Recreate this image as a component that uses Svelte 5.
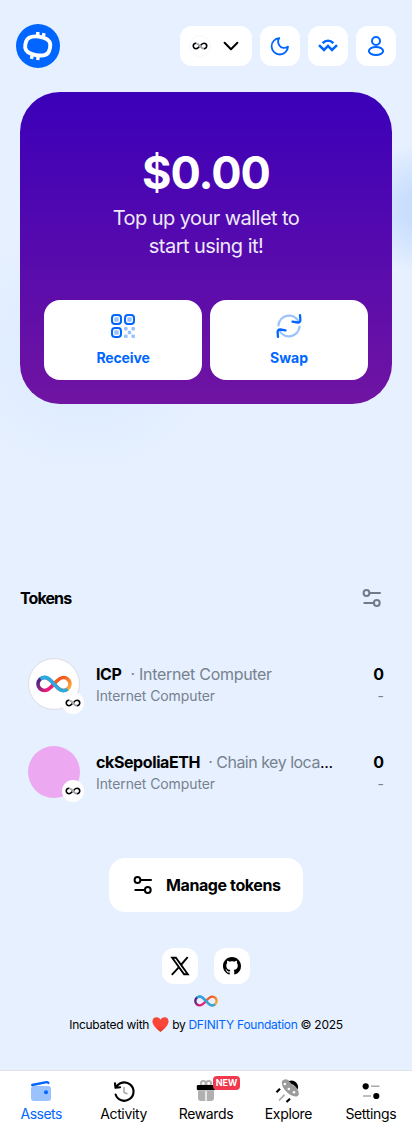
<script>
  const tokens = [
    { symbol: 'ICP', name: 'Internet Computer', network: 'Internet Computer', icp: true },
    { symbol: 'ckSepoliaETH', name: 'Chain key loca', network: 'Internet Computer', icp: false, cut: true }
  ];
  const leftLoop = 'M0 0C-4-4.6-6.4-6.5-9.4-6.5-13-6.5-16-3.6-16 0S-13 6.5-9.4 6.5C-6.4 6.5-4 4.6 0 0';
  const rightLoop = 'M0 0C4-4.6 6.4-6.5 9.4-6.5 13-6.5 16-3.6 16 0S13 6.5 9.4 6.5C6.4 6.5 4 4.6 0 0';
  const blueStrand = 'M-13.5-5.1C-10.5-7.3-7-6.8-4.5-4.7L4.5 4.7C7 6.8 10.5 7.3 13.5 5.1';
</script>

{#snippet infinity(w)}
  <svg width={w} height={w * 0.5} viewBox="-18 -9 36 18" fill="none" stroke-width="3.6">
    <defs>
      <linearGradient id="warm" gradientUnits="userSpaceOnUse" x1="2" y1="-5" x2="16" y2="5"><stop offset=".3" stop-color="#f15a24" /><stop offset="1" stop-color="#fbb03b" /></linearGradient>
      <linearGradient id="cool" gradientUnits="userSpaceOnUse" x1="-16" y1="-4" x2="-4" y2="5"><stop offset=".1" stop-color="#522785" /><stop offset=".9" stop-color="#ed1e79" /></linearGradient>
    </defs>
    <path d={leftLoop} stroke="url(#cool)" />
    <path d={rightLoop} stroke="url(#warm)" />
    <path d={blueStrand} stroke="#29abe2" />
  </svg>
{/snippet}

{#snippet monoInfinity()}
  <svg width="16" height="8" viewBox="-19 -9.5 38 19" fill="none" stroke-width="3.8">
    <path d={leftLoop} stroke="#000" />
    <path d={rightLoop} stroke="#000" />
    <path d="M-9-6.5C-6-6.5-4-4.6 0 0S6 6.5 9 6.5" stroke="#fff" stroke-width="4.4" />
    <path d="M-9-6.5C-6-6.5-4-4.6 0 0S6 6.5 9 6.5" stroke="#9a9ca8" stroke-width="3" />
  </svg>
{/snippet}

{#snippet sliders()}
  <svg width="20" height="20" viewBox="0 0 20 20" fill="none" stroke="currentColor" stroke-width="2" stroke-linecap="round">
    <circle cx="4.5" cy="5" r="2.9" /><path d="M8 5h10M2.3 15h9" /><circle cx="14.8" cy="15" r="2.9" />
  </svg>
{/snippet}

<div class="page">
  <header>
    <svg class="logo" width="44" height="44" viewBox="0 0 44 44">
      <circle cx="22" cy="22" r="22" fill="#0066ff" />
      <g fill="none" stroke="#fff" stroke-width="3.9">
        <path d="M10.2 17.3C12 12.6 17.5 11.8 23 12.7S33.8 15.6 34.3 20.3C34.5 23 33.7 25.6 32.8 27.6 31 31.8 25.8 32 20.5 31.2S9.8 28.8 9.2 23.8C9 21.5 9.4 19.4 10.2 17.3Z" />
        <path d="M21.8 12.5V8M27.2 13.3l.8-4.2M16.3 30.7l-.8 4.2M22.3 31.5l-.6 4.5" stroke-width="3.4" />
      </g>
    </svg>
    <div class="tools">
      <button class="tool network" aria-label="Network">
        <span class="ring">{@render monoInfinity()}</span>
        <svg width="16" height="10" viewBox="0 0 16 10" fill="none" stroke="#000" stroke-width="2" stroke-linecap="round" stroke-linejoin="round"><path d="M1.6 1.8 8 8.2l6.4-6.4" /></svg>
      </button>
      <button class="tool" aria-label="Theme">
        <svg width="20" height="20" viewBox="0 0 20 20" fill="none" stroke="#0066ff" stroke-width="1.8" stroke-linejoin="round"><path d="M9.3 2.1A8.2 8.2 0 1 0 18 10.6C15 12.8 11.3 12.3 9.4 9.4 7.8 7 7.8 4.3 9.3 2.1Z" /></svg>
      </button>
      <button class="tool" aria-label="WalletConnect">
        <svg width="20" height="14" viewBox="0 0 20 14" fill="none" stroke="#0066ff" stroke-width="2.5" stroke-linejoin="miter"><path d="M4.6 4.1C7.8 1 12.2 1 15.4 4.1M1 6.1l5 4.8 4-4 4 4 5-4.8" /></svg>
      </button>
      <button class="tool" aria-label="Account">
        <svg width="20" height="22" viewBox="0 0 20 22" fill="none" stroke="#0066ff" stroke-width="2"><circle cx="10" cy="6" r="4" /><ellipse cx="10" cy="16" rx="7.1" ry="4" /></svg>
      </button>
    </div>
  </header>

  <section class="card">
    <h1>$0.00</h1>
    <p>Top up your wallet to<br /><span class="second">start using it!</span></p>
    <div class="actions">
      <button>
        <svg width="26" height="26" viewBox="0 0 26 26" fill="none">
          <g stroke="#0066ff" stroke-width="2"><rect x="2" y="2" width="9" height="9" rx="3" /><rect x="15" y="2" width="9" height="9" rx="3" /><rect x="2" y="15" width="9" height="9" rx="3" /></g>
          <g fill="#99c2ff"><rect x="4.3" y="4.3" width="4.4" height="4.4" rx="1" /><rect x="17.3" y="4.3" width="4.4" height="4.4" rx="1" /><rect x="4.3" y="17.3" width="4.4" height="4.4" rx="1" /><rect x="14" y="14" width="3.6" height="3.6" rx="1" /><rect x="21.4" y="14" width="3.6" height="3.6" rx="1" /><rect x="17.7" y="17.7" width="3.6" height="3.6" rx="1" /><rect x="14" y="21.4" width="3.6" height="3.6" rx="1" /><rect x="21.4" y="21.4" width="3.6" height="3.6" rx="1" /></g>
        </svg>
        <span class="receive">Receive</span>
      </button>
      <button>
        <svg width="26" height="26" viewBox="0 0 26 26" fill="none" stroke-width="2.3" stroke-linecap="round" stroke-linejoin="round">
          <path d="M2.4 12.3A10.8 10.8 0 0 1 22.4 8M23.6 13.7A10.8 10.8 0 0 1 3.6 18" stroke="#99c2ff" />
          <path d="M24 2.2 24.4 7Q24.3 9.6 21.8 9.5L16.5 8.6M2 23.8 1.6 19Q1.7 16.4 4.2 16.5L9.5 17.4" stroke="#0066ff" />
        </svg>
        <span class="swap">Swap</span>
      </button>
    </div>
  </section>

  <main>
    <div class="heading"><h2>Tokens</h2><span class="filter">{@render sliders()}</span></div>
    {#each tokens as t}
      <div class="token">
        <div class="avatar" class:icp={t.icp}>
          {#if t.icp}{@render infinity(36)}{/if}
          <span class="badge">{@render monoInfinity()}</span>
        </div>
        <div class="info">
          <div class="name"><b>{t.symbol}</b><span class="full" class:tight={t.cut}>· {t.name}</span>{#if t.cut}<span class="dots">...</span>{/if}</div>
          <div class="net">{t.network}</div>
        </div>
        <div class="amount"><b>0</b><span>-</span></div>
      </div>
    {/each}
    <button class="manage">{@render sliders()}<span>Manage tokens</span></button>
  </main>

  <footer>
    <div class="social">
      <span class="soc"><svg width="20" height="20" viewBox="0 0 20 20"><path d="M2.2 1.7h3.7l11.9 16.6h-3.7z" fill="#fff" stroke="#000" stroke-width="1.9" /><path d="M17.7 1.2 11.3 8.5M8.5 11.7 1.8 18.8" stroke="#000" stroke-width="1.9" /></svg></span>
      <span class="soc"><svg width="18" height="18" viewBox="0 0 16 16"><path fill="#000" d="M8 0C3.58 0 0 3.58 0 8c0 3.54 2.29 6.53 5.47 7.59.4.07.55-.17.55-.38 0-.19-.01-.82-.01-1.49-2.01.37-2.53-.49-2.69-.94-.09-.23-.48-.94-.82-1.13-.28-.15-.68-.52-.01-.53.63-.01 1.08.58 1.23.82.72 1.21 1.87.87 2.33.66.07-.52.28-.87.51-1.07-1.78-.2-3.64-.89-3.64-3.95 0-.87.31-1.59.82-2.15-.08-.2-.36-1.02.08-2.12 0 0 .67-.21 2.2.82.64-.18 1.32-.27 2-.27s1.36.09 2 .27c1.53-1.04 2.2-.82 2.2-.82.44 1.1.16 1.92.08 2.12.51.56.82 1.27.82 2.15 0 3.07-1.87 3.75-3.65 3.95.29.25.54.73.54 1.48 0 1.07-.01 1.93-.01 2.2 0 .21.15.46.55.38A8.01 8.01 0 0 0 16 8c0-4.42-3.58-8-8-8Z" /></svg></span>
    </div>
    <div class="mark">{@render infinity(24)}</div>
    <div class="credit">
      <span>Incubated with</span>
      <svg width="17" height="15" viewBox="0 0 17 15"><defs><linearGradient id="heart" x2="0" y2="1"><stop stop-color="#f04a3c" /><stop offset=".6" stop-color="#ff4338" /><stop offset="1" stop-color="#d93327" /></linearGradient></defs><path fill="url(#heart)" d="M8.5 2.7C9.8.3 12.2-.1 14 .5c2.3.8 3 3.3 2.3 5.6C15.4 9.5 11.8 12.4 8.5 15 5.2 12.4 1.6 9.5.7 6.1 0 3.8.7 1.3 3 .5c1.8-.6 4.2-.2 5.5 2.2Z" /></svg>
      <span>by</span> <a href="#dfinity">DFINITY Foundation</a> <span>© 2025</span>
    </div>
  </footer>

  <nav>
    <a class="active" href="#assets">
      <svg width="24" height="24" viewBox="0 0 24 24"><rect x="2" y="7" width="20" height="15" rx="3" fill="#99c2ff" /><path d="M3.2 6 17.5 3.2Q19 3 19.4 4" fill="none" stroke="#0066ff" stroke-width="2.3" stroke-linecap="round" /><circle cx="17" cy="13.3" r="2" fill="#0066ff" /></svg>
      <span>Assets</span>
    </a>
    <a href="#activity">
      <svg width="24" height="24" viewBox="0 0 24 24" fill="none" stroke="#000" stroke-width="2.1" stroke-linecap="round" stroke-linejoin="round"><path d="M4 8.7A9.2 9.2 0 1 1 3.6 15.5M3 4.4 3.5 8.8l4.6-.6" /><path d="M12 8.5v4.7l3 1.5" stroke="#aaa" stroke-width="1.6" /></svg>
      <span>Activity</span>
    </a>
    <a href="#rewards">
      <div class="gift">
        <svg width="24" height="24" viewBox="0 0 24 24"><g fill="none" stroke="#b0b0b0" stroke-width="1.9"><circle cx="9.3" cy="4.4" r="2.4" /><circle cx="14.7" cy="4.4" r="2.4" /></g><path fill="#b0b0b0" d="M4 12h7.3v10H7a3 3 0 0 1-3-3zM12.7 12H20v7a3 3 0 0 1-3 3h-4.3z" /><rect x="2.8" y="6" width="18.4" height="5.2" rx="1.3" fill="#000" /></svg>
        <span class="new">NEW</span>
      </div>
      <span>Rewards</span>
    </a>
    <a href="#explore">
      <svg width="26" height="24" viewBox="0 0 26 24"><path d="M8.3 1C12-1.3 15.3 2.3 17.3 5.8c3.6 1.9 7.2 5.8 6.4 9.6-1 3.7-7.8 2-12-2.3S5 3.3 8.3 1Z" fill="#9b9b9b" /><path d="M13.8 2.3C18.5-.9 25 5.2 22.6 10.2 20.7 7.6 19 6 16.5 5 15.9 3.9 15 3 13.8 2.3Z" fill="#000" /><g fill="#fff"><circle cx="9.8" cy="5" r="1.3" /><circle cx="13.8" cy="10" r="1.3" /><circle cx="19" cy="13.3" r="1.3" /></g><path d="M5 9.8 1.5 13.3M15 19.8 11.5 23" stroke="#000" stroke-width="2.2" /><path d="M9.5 15.8 4 21.5" stroke="#aaa" stroke-width="1.8" /></svg>
      <span>Explore</span>
    </a>
    <a href="#settings">
      <svg width="24" height="24" viewBox="0 0 24 24"><path d="M12 7.3h8.5M4 17h8" stroke="#aaa" stroke-width="1.6" /><circle cx="6.7" cy="7.3" r="3.1" fill="#000" /><circle cx="17.3" cy="17" r="3.1" fill="#000" /></svg>
      <span>Settings</span>
    </a>
  </nav>
</div>

<style>
  :global(body) { margin: 0; }
  * { box-sizing: border-box; }
  .page {
    width: 412px; height: 1132px; display: flex; flex-direction: column; overflow: hidden;
    font-family: Inter, "Liberation Sans", sans-serif; color: #000;
    background:
      radial-gradient(ellipse 90px 66px at 436px 208px, #c9defd 35%, #c9defd00 100%),
      radial-gradient(ellipse 130px 120px at 85px 350px, #dcebff 20%, #dcebff00 100%),
      #e6f0ff;
  }
  button { font: inherit; border: 0; padding: 0; color: inherit; }
  svg { display: block; flex: none; }
  a { color: inherit; text-decoration: none; }
  header { display: flex; justify-content: space-between; align-items: center; height: 92px; padding: 0 16px; }
  .tools { display: flex; gap: 8px; }
  .tool { width: 40px; height: 40px; border-radius: 12px; background: #fff; display: grid; place-items: center; }
  .network { width: 72px; display: flex; align-items: center; padding: 0 13px 0 9px; justify-content: space-between; }
  .ring { width: 22px; height: 22px; border: 1px solid #f8f8f8; border-radius: 50%; display: grid; place-items: center; }
  .card {
    margin: 0 20px; height: 312px; border-radius: 40px; padding: 53px 24px 24px; color: #fff; text-align: center;
    background: linear-gradient(#3b00b9, #7014a2); display: flex; flex-direction: column;
  }
  h1 { margin: 0; font-size: 45px; line-height: 56px; font-weight: 700; letter-spacing: -1px; }
  p { margin: 3px 0 0; font-size: 20px; line-height: 28px; letter-spacing: -0.55px; color: #eee9fa; }
  .actions { margin-top: auto; display: grid; grid-template-columns: 1fr 1fr; gap: 8px; }
  .actions button {
    height: 80px; border-radius: 16px; background: #fff; color: #0066ff; font-size: 14px; line-height: 20px; font-weight: 700;
    display: flex; flex-direction: column; align-items: center; padding-top: 13px; gap: 9px;
  }
  .receive { letter-spacing: -0.15px; }
  main { margin-top: 178px; display: flex; flex-direction: column; }
  .heading { height: 32px; display: flex; align-items: center; justify-content: space-between; padding: 0 30px 0 20px; }
  h2 { margin: 0; font-size: 16px; font-weight: 700; letter-spacing: -0.9px; }
  .filter { color: #6f7b88; }
  .token { height: 52px; margin: 44px 28px -8px; display: flex; align-items: center; }
  .avatar { position: relative; width: 52px; height: 52px; border-radius: 50%; background: #eda8f2; display: grid; place-items: center; }
  .avatar.icp { background: #fff; border: 1px solid #dcdde2; }
  .badge { position: absolute; right: -4px; bottom: -4px; width: 22px; height: 22px; border-radius: 50%; background: #fff; display: grid; place-items: center; }
  .icp .badge { right: -5px; bottom: -5px; }
  .info { margin-left: 16px; flex: 1; white-space: nowrap; }
  .name { font-size: 16px; line-height: 24px; height: 24px; }
  .name .full { color: #77828e; margin-left: 9px; letter-spacing: -0.3px; }
  .name .full.tight { margin-left: 8px; letter-spacing: -0.5px; }
  .name b { letter-spacing: -0.4px; }
  .dots { letter-spacing: -0.3px; }
  .net { font-size: 14px; line-height: 20px; color: #77828e; letter-spacing: -0.1px; }
  .amount { display: flex; flex-direction: column; align-items: flex-end; font-size: 16px; line-height: 24px; }
  .amount span { font-size: 14px; line-height: 20px; color: #77828e; }
  .manage {
    align-self: center; margin-top: 68px; width: 194px; height: 54px; border-radius: 16px; background: #fff;
    display: flex; align-items: center; padding-left: 24px; gap: 13px; font-size: 16px; font-weight: 700; letter-spacing: -0.4px; white-space: nowrap;
  }
  footer { margin-top: 36px; display: flex; flex-direction: column; align-items: center; }
  .social { display: flex; gap: 16px; }
  .soc { width: 36px; height: 36px; border-radius: 12px; background: #fff; display: grid; place-items: center; }
  .mark { margin-top: 11px; }
  .credit { margin-top: 7px; height: 20px; display: flex; align-items: center; gap: 3px; font-size: 12px; white-space: nowrap; letter-spacing: -0.27px; }
  .credit a { color: #0066ff; }
  nav { margin-top: auto; height: 62px; background: #fff; border-top: 1px solid #e0e3e8; display: grid; grid-template-columns: repeat(5, 1fr); font-size: 14px; }
  nav a { display: flex; flex-direction: column; align-items: center; padding-top: 8px; line-height: 20px; gap: 1px; white-space: nowrap; letter-spacing: -0.35px; }
  nav .active { letter-spacing: -0.5px; color: #0066ff; }
  .gift { position: relative; }
  .new { position: absolute; left: 19px; top: -3px; width: 27px; height: 14px; border-radius: 4px; background: #f0384f; color: #fff; font-size: 9px; font-weight: 700; line-height: 14px; text-align: center; letter-spacing: 0; }
</style>
